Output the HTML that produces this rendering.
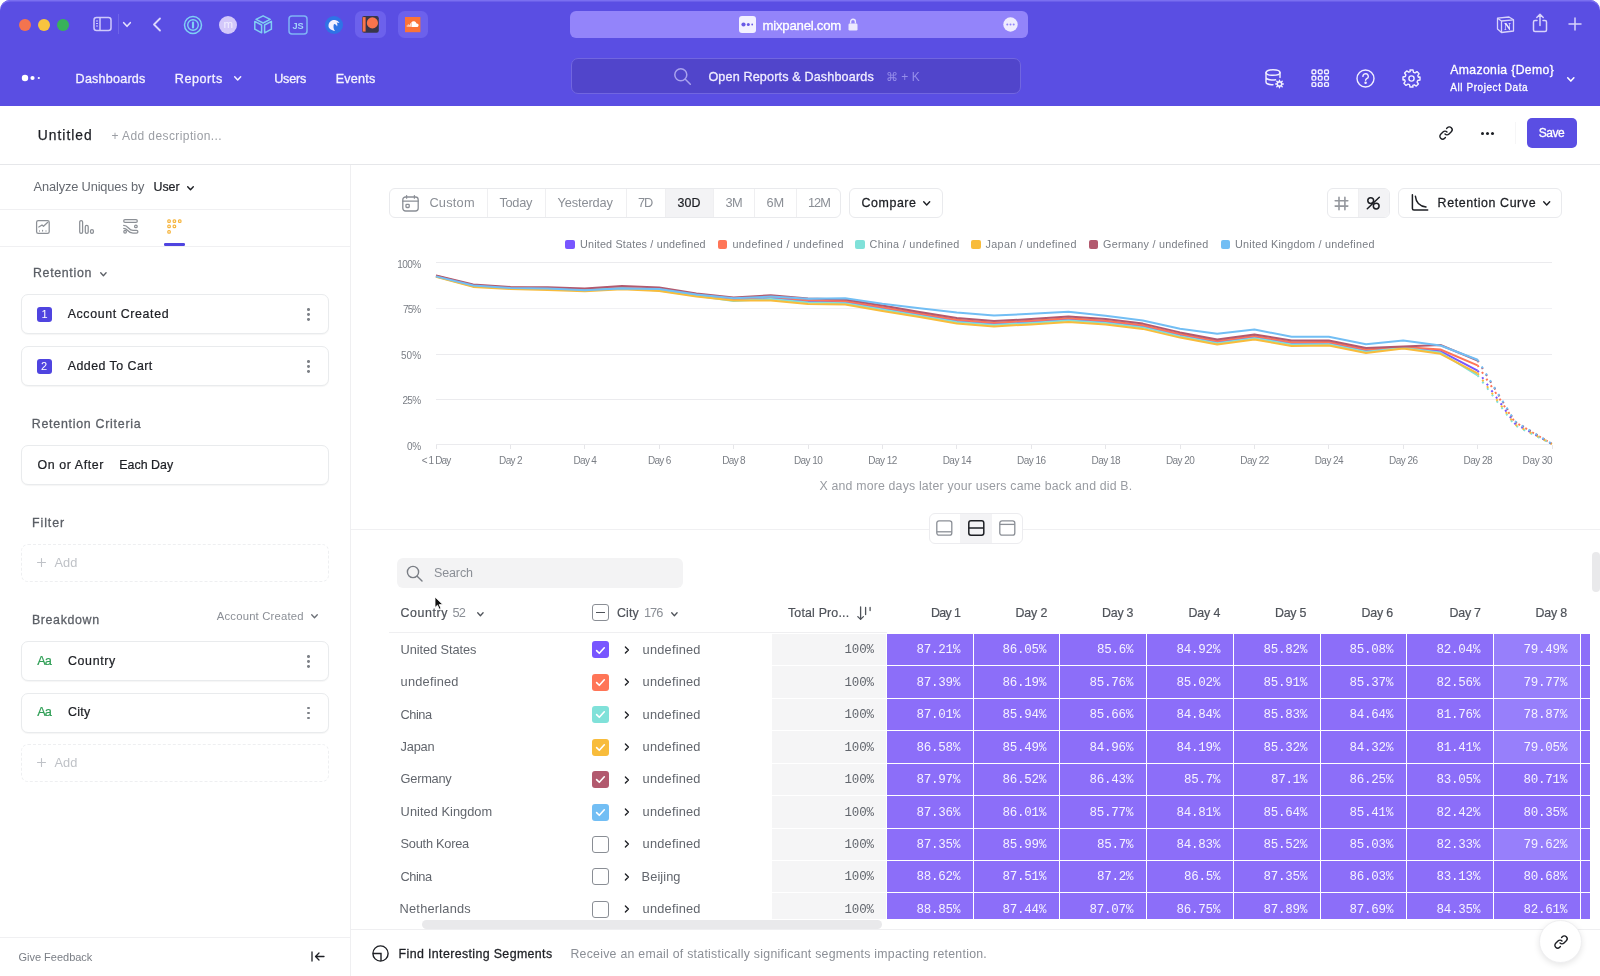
<!DOCTYPE html>
<html lang="en"><head><meta charset="utf-8"><title>Untitled - Mixpanel</title>
<style>
*{box-sizing:border-box;margin:0;padding:0}
html,body{width:1600px;height:976px;overflow:hidden;background:#fff}
body{font-family:"Liberation Sans",sans-serif;color:#222;position:relative;font-size:13px}
#app{position:absolute;left:0;top:0;width:1600px;height:976px;overflow:hidden;background:#fff;will-change:transform}
.a{position:absolute}
.t{position:absolute;white-space:nowrap;line-height:1}
.m{font-family:"Liberation Mono",monospace}
svg{position:absolute;overflow:visible}
#top{left:0;top:0;width:1600px;height:106px;background:#5a4ee3;border-radius:10px 10px 0 0;box-shadow:inset 0 1.5px 0 #7a6ff0}
.card{position:absolute;left:21px;width:308px;height:40px;border:1px solid #e9ebed;border-radius:7px;background:#fff;box-shadow:0 1px 1px rgba(0,0,0,.04)}
.dash{position:absolute;left:21px;width:308px;height:38px;border:1px dashed #eeeff1;border-radius:7px}
.kebab{position:absolute;left:307.2px;width:2.8px;height:2.8px;border-radius:50%;background:#7d8187;box-shadow:0 4.9px 0 #7d8187,0 -4.9px 0 #7d8187}
.seg{position:absolute;top:188px;height:30px;border:1px solid #e9eaed;border-radius:6px;background:#fff}
.vd{position:absolute;top:189px;width:1px;height:28px;background:#efeff1}
.sw{position:absolute;top:240px;width:9.4px;height:9.4px;border-radius:2px}
.tot{position:absolute;left:772px;width:114px;background:#f5f5f6}
.cell{position:absolute}
.cb{position:absolute;left:592px;width:17px;height:17px;border-radius:3px}
.cbe{border:1px solid #8a8e95;background:#fff}
</style></head>
<body>
<div id="app">
<div id="top" class="a"></div>
<div class="a" style="left:18.8px;top:18.9px;width:11.8px;height:11.8px;border-radius:50%;background:#f3744f"></div>
<div class="a" style="left:37.9px;top:18.9px;width:11.8px;height:11.8px;border-radius:50%;background:#f8c43f"></div>
<div class="a" style="left:57px;top:18.9px;width:11.8px;height:11.8px;border-radius:50%;background:#38b25a"></div>
<svg style="left:93px;top:16px" width="20" height="16" viewBox="0 0 20 16" fill="none" stroke="#cfc9fb" stroke-width="1.5"><rect x="1" y="1.5" width="17" height="13" rx="2.5"/><path d="M7 1.5v13"/><path d="M3 5h2M3 7.5h2M3 10h2" stroke-width="1"/></svg>
<div class="a" style="left:118px;top:14px;width:1px;height:20px;background:#6f64e8"></div>
<svg style="left:123px;top:21.5px" width="8" height="5" viewBox="0 0 8 5" fill="none" stroke="#e4e0fd" stroke-width="1.6" stroke-linecap="round" stroke-linejoin="round"><path d="M.7 .7L4 4.3L7.3 .7"/></svg>
<svg style="left:152px;top:17px" width="10" height="15" viewBox="0 0 10 15" fill="none" stroke="#dcd7fc" stroke-width="1.8" stroke-linecap="round" stroke-linejoin="round"><path d="M8 1.5L2 7.5l6 6"/></svg>
<svg style="left:183px;top:15px" width="20" height="20" viewBox="0 0 20 20" fill="none"><circle cx="10" cy="10" r="8.5" stroke="#7fd0f5" stroke-width="1.5"/><circle cx="10" cy="10" r="5.3" stroke="#7fd0f5" stroke-width="1.4"/><rect x="8.9" y="6.6" width="2.2" height="6.8" rx="1" fill="#7fd0f5"/></svg>
<div class="a" style="left:219px;top:16px;width:18px;height:18px;border-radius:50%;background:#d3c8fa"></div>
<div class="t" style="left:223.5px;top:19px;font-size:11.5px;color:#f1eefe">m</div>
<svg style="left:254px;top:15.4px" width="19" height="19" viewBox="0 0 19 19" fill="none" stroke="#80cef3" stroke-width="1.5" stroke-linejoin="round"><path d="M9.1 .8L16.2 4.4L9.1 8L2 4.4Z"/><path d="M.8 6.4L7.6 10V17.8L.8 14.2Z"/><path d="M10.6 10L17.4 6.4V14.2L10.6 17.8Z"/></svg>
<svg style="left:288px;top:15px" width="20" height="20" viewBox="0 0 20 20" fill="none"><rect x="1" y="1" width="18" height="18" rx="3" stroke="#7fb4f5" stroke-width="1.5"/><text x="10" y="13.5" text-anchor="middle" font-family="Liberation Sans, sans-serif" font-weight="700" font-size="9.2" fill="#a3d4fa">JS</text></svg>
<svg style="left:324px;top:15px" width="20" height="20" viewBox="0 0 20 20"><circle cx="10" cy="10" r="9" fill="#2f73e6"/><path d="M4.5 11c0-4 3-6.5 6.5-6 2 .3 3.5 1.5 4.5 3l-3-.5c1 1 1.2 2.5.5 4-.5-1.5-1.5-2.5-3-2.5-1 2.5-.5 5 1 7-3.5-.5-6.5-2.5-6.5-5z" fill="#f3f0ff"/></svg>
<div class="a" style="left:355px;top:11.4px;width:31px;height:26.8px;border-radius:6.5px;background:#6c61ec"></div>
<svg style="left:362.2px;top:16.2px" width="17" height="17" viewBox="0 0 17 17"><rect width="16.8" height="16.7" rx="2.2" fill="#37364a"/><rect x=".6" y="1.1" width="3" height="14.5" fill="#f9744c"/><circle cx="10.4" cy="6.9" r="5.6" fill="#f9744c"/></svg>
<div class="a" style="left:397.6px;top:11.4px;width:30.5px;height:26.8px;border-radius:6.5px;background:#6c61ec"></div>
<svg style="left:404.7px;top:17px" width="16" height="16" viewBox="0 0 16 16"><rect width="15.4" height="15.2" fill="#fb7337"/><path d="M2.2 9.8V8.3M3.3 9.8V7.3M4.4 9.8V7.8M5.5 9.8V6.3" stroke="#fde4d8" stroke-width=".9"/><path d="M6.4 10V5.3c.7-.9 1.7-1.3 2.7-1.1 1.2.2 2.1 1.1 2.4 2.3 1.1-.2 2.1.6 2.1 1.7 0 1-.8 1.8-1.8 1.8z" fill="#fff"/></svg>
<div class="a" style="left:570px;top:11px;width:458px;height:27px;border-radius:6px;background:#9384fa"></div>
<svg style="left:739px;top:16px" width="17" height="17" viewBox="0 0 17 17"><rect width="17" height="17" rx="3" fill="#f3f1ff"/><circle cx="4.5" cy="8.5" r="2.1" fill="#6a5be6"/><circle cx="9.3" cy="8.5" r="1.5" fill="#6a5be6"/><circle cx="13.2" cy="8.5" r=".9" fill="#6a5be6"/></svg>
<div class="t" style="left:762.5px;top:19px;font-size:13.2px;color:#fff;letter-spacing:-0.23px;-webkit-text-stroke:0.3px #fff">mixpanel.com</div>
<svg style="left:848px;top:18px" width="10" height="13" viewBox="0 0 10 13"><rect x=".5" y="5.5" width="9" height="7" rx="1.2" fill="#ece9fe"/><path d="M2.6 5.5V3.7a2.4 2.4 0 014.8 0v1.8" fill="none" stroke="#ece9fe" stroke-width="1.4"/></svg>
<svg style="left:1003px;top:17px" width="15" height="15" viewBox="0 0 15 15"><circle cx="7.5" cy="7.5" r="7.2" fill="#efecfe"/><circle cx="4.3" cy="7.5" r="1" fill="#9384fa"/><circle cx="7.5" cy="7.5" r="1" fill="#9384fa"/><circle cx="10.7" cy="7.5" r="1" fill="#9384fa"/></svg>
<svg style="left:1496px;top:15px" width="19" height="19" viewBox="0 0 19 19" fill="none" stroke="#d8d3fb" stroke-width="1.3" stroke-linejoin="round"><path d="M1.5 3.2l11.5-1.2 4.5 2.8V16l-12 1.5-4-3.5z"/><path d="M1.5 3.2l4 2.8 12-1.2M5.5 6v11.5"/><text x="11.4" y="14.6" text-anchor="middle" font-family="Liberation Serif, serif" font-weight="700" font-size="9.5" fill="#efecfe" stroke="none">N</text></svg>
<svg style="left:1532px;top:13px" width="16" height="20" viewBox="0 0 16 20" fill="none" stroke="#d8d3fb" stroke-width="1.5" stroke-linecap="round" stroke-linejoin="round"><path d="M5 7.5H3a1.5 1.5 0 00-1.5 1.5v8A1.5 1.5 0 003 18.5h10a1.5 1.5 0 001.5-1.5V9A1.5 1.5 0 0013 7.5h-2M8 12.5V1.5M4.8 4.5L8 1.3l3.2 3.2"/></svg>
<svg style="left:1568px;top:17px" width="14" height="14" viewBox="0 0 14 14" fill="none" stroke="#d8d3fb" stroke-width="1.5" stroke-linecap="round"><path d="M7 1v12M1 7h12"/></svg>
<svg style="left:21px;top:73px" width="22" height="10" viewBox="0 0 22 10"><circle cx="4" cy="5" r="3.2" fill="#fff"/><circle cx="11.5" cy="5" r="2.1" fill="#fff"/><circle cx="17.8" cy="5" r="1.1" fill="#fff"/></svg>
<div class="t" style="left:75.6px;top:73px;font-size:12.6px;color:#f4f2ff;letter-spacing:0.2px;-webkit-text-stroke:0.3px #f4f2ff">Dashboards</div>
<div class="t" style="left:174.8px;top:73px;font-size:12.6px;color:#f4f2ff;letter-spacing:0.55px;-webkit-text-stroke:0.3px #f4f2ff">Reports</div>
<svg style="left:233.8px;top:76px" width="7.4" height="4.7" viewBox="0 0 7.4 4.7" fill="none" stroke="#f4f2ff" stroke-width="1.5" stroke-linecap="round" stroke-linejoin="round"><path d="M.7 .7L3.7 4L6.7 .7"/></svg>
<div class="t" style="left:274.2px;top:73px;font-size:12.6px;color:#f4f2ff;letter-spacing:-0.22px;-webkit-text-stroke:0.3px #f4f2ff">Users</div>
<div class="t" style="left:335.7px;top:73px;font-size:12.6px;color:#f4f2ff;letter-spacing:0.2px;-webkit-text-stroke:0.3px #f4f2ff">Events</div>
<div class="a" style="left:571px;top:58px;width:450px;height:36px;border-radius:7px;background:#5145cb;border:1px solid #7166e0"></div>
<svg style="left:673px;top:67px" width="19" height="19" viewBox="0 0 19 19" fill="none" stroke="#a9a2ee" stroke-width="1.5" stroke-linecap="round"><circle cx="7.8" cy="7.8" r="6"/><path d="M12.3 12.3l5 5"/></svg>
<div class="t" style="left:708.4px;top:71px;font-size:12.6px;color:#efecff;letter-spacing:0.15px;-webkit-text-stroke:0.3px #efecff">Open Reports &amp; Dashboards</div>
<div class="t" style="left:885.9px;top:71px;font-size:12px;color:#968eea;letter-spacing:0.03px">⌘ + K</div>
<svg style="left:1264px;top:68px" width="22" height="22" viewBox="0 0 22 22" fill="none" stroke="#f1efff" stroke-width="1.4" stroke-linecap="round" stroke-linejoin="round"><ellipse cx="9" cy="4.5" rx="7" ry="2.8"/><path d="M2 4.5v9.5c0 1.5 3 2.8 7 2.8M16 4.5v5M2 9.2c0 1.5 3 2.8 7 2.8 1 0 1.8-.1 2.6-.2"/><circle cx="15.5" cy="16" r="2.2"/><path d="M15.5 12.2v1.6M15.5 18.2v1.6M11.7 16h1.6M17.7 16h1.6M12.8 13.3l1.1 1.1M17.1 17.6l1.1 1.1M12.8 18.7l1.1-1.1M17.1 14.4l1.1-1.1"/></svg>
<svg style="left:1311px;top:69px" width="19" height="19" viewBox="0 0 19 19" fill="none" stroke="#f1efff" stroke-width="1.4"><rect x="1" y="1" width="3.8" height="3.8" rx="1"/><rect x="1" y="7.3" width="3.8" height="3.8" rx="1"/><rect x="1" y="13.6" width="3.8" height="3.8" rx="1"/><rect x="7.3" y="1" width="3.8" height="3.8" rx="1"/><rect x="7.3" y="7.3" width="3.8" height="3.8" rx="1"/><rect x="7.3" y="13.6" width="3.8" height="3.8" rx="1"/><rect x="13.6" y="1" width="3.8" height="3.8" rx="1"/><rect x="13.6" y="7.3" width="3.8" height="3.8" rx="1"/><rect x="13.6" y="13.6" width="3.8" height="3.8" rx="1"/></svg>
<svg style="left:1356px;top:69px" width="19" height="19" viewBox="0 0 19 19" fill="none" stroke="#f1efff" stroke-width="1.4" stroke-linecap="round" stroke-linejoin="round"><circle cx="9.5" cy="9.5" r="8.5"/><path d="M6.9 7.4a2.7 2.7 0 115.2 1c-.4 1-2.5 1.3-2.5 2.8"/><circle cx="9.6" cy="13.8" r=".6" fill="#f1efff"/></svg>
<svg style="left:1401.5px;top:68.5px" width="19" height="19" viewBox="0 0 19 19" fill="none" stroke="#f1efff" stroke-width="1.4" stroke-linejoin="round"><path d="M8 1h3l.5 2.3 1.5.6 2-1.3 2.1 2.1-1.3 2 .6 1.5L18 8v3l-2.3.5-.6 1.5 1.3 2-2.1 2.1-2-1.3-1.5.6L11 18H8l-.5-2.3-1.5-.6-2 1.3-2.1-2.1 1.3-2-.6-1.5L1 11V8l2.3-.5.6-1.5-1.3-2 2.1-2.1 2 1.3 1.5-.6z"/><circle cx="9.5" cy="9.5" r="2.6"/></svg>
<div class="t" style="left:1450.3px;top:64px;font-size:12.2px;color:#fff;letter-spacing:0.37px;-webkit-text-stroke:0.3px #fff">Amazonia {Demo}</div>
<div class="t" style="left:1450.3px;top:83px;font-size:10px;color:#fff;letter-spacing:0.56px;-webkit-text-stroke:0.27px #fff">All Project Data</div>
<svg style="left:1566.7px;top:76.7px" width="7.6" height="4.8" viewBox="0 0 7.6 4.8" fill="none" stroke="#fff" stroke-width="1.5" stroke-linecap="round" stroke-linejoin="round"><path d="M.7 .7L3.8 4.1L6.8999999999999995 .7"/></svg>
<div class="a" style="left:0;top:164px;width:1600px;height:1px;background:#e6e7ea"></div>
<div class="t" style="left:37.7px;top:129px;font-size:13.8px;color:#1d1f24;letter-spacing:1.04px;-webkit-text-stroke:0.25px #1d1f24">Untitled</div>
<div class="t" style="left:111.5px;top:130px;font-size:12px;color:#9b9ea4;letter-spacing:0.41px">+ Add description...</div>
<svg style="left:1438.5px;top:125.5px" width="14" height="14" viewBox="0 0 14 14" fill="none" stroke="#1d1f24" stroke-width="1.4" stroke-linecap="round"><path d="M6 8a2.8 2.8 0 004 0l2.3-2.3a2.8 2.8 0 00-4-4L7.6 2.4"/><path d="M8 6a2.8 2.8 0 00-4 0L1.7 8.3a2.8 2.8 0 004 4l.7-.7"/></svg>
<div class="a" style="left:1481px;top:131.5px;width:3px;height:3px;border-radius:50%;background:#1d1f24;box-shadow:5px 0 0 #1d1f24,10px 0 0 #1d1f24"></div>
<div class="a" style="left:1515px;top:122px;width:1px;height:22px;background:#f6f6f7"></div>
<div class="a" style="left:1527px;top:118px;width:50px;height:29.5px;border-radius:5px;background:#5a4ee3"></div>
<div class="t" style="left:1538.7px;top:127px;font-size:12px;color:#fff;letter-spacing:-0.46px;-webkit-text-stroke:0.3px #fff">Save</div>
<div class="a" style="left:350px;top:165px;width:1px;height:811px;background:#efeff1"></div>
<div class="t" style="left:33.6px;top:181px;font-size:12.8px;color:#666a71;letter-spacing:-0.14px">Analyze Uniques by</div>
<div class="t" style="left:153.6px;top:181px;font-size:12.4px;color:#1d1f24;letter-spacing:-0.08px;-webkit-text-stroke:0.22px #1d1f24">User</div>
<svg style="left:187px;top:185.6px" width="7" height="4.5" viewBox="0 0 7 4.5" fill="none" stroke="#1d1f24" stroke-width="1.4" stroke-linecap="round" stroke-linejoin="round"><path d="M.7 .7L3.5 3.8L6.3 .7"/></svg>
<div class="a" style="left:0;top:209px;width:350px;height:1px;background:#f0f0f2"></div>
<div class="a" style="left:0;top:246px;width:350px;height:1px;background:#f0f0f2"></div>
<svg style="left:36px;top:219.5px" width="14" height="14" viewBox="0 0 14 14" fill="none" stroke="#8c9096" stroke-width="1.25" stroke-linecap="round" stroke-linejoin="round"><rect x=".6" y=".6" width="12.6" height="12.8" rx="1.7"/><path d="M2.8 7l3.2-2 1.5 1.3 4.3-4"/><path d="M3.5 10.9v.2M6.6 10.2v.9M10 10.9v.2" stroke-width="1.1"/></svg>
<svg style="left:79px;top:219.5px" width="15" height="14" viewBox="0 0 15 14" fill="none" stroke="#8c9096" stroke-width="1.25"><rect x=".7" y=".6" width="2.9" height="12.8" rx="1.4"/><rect x="6.3" y="5.4" width="2.9" height="8" rx="1.4"/><rect x="11.5" y="9.6" width="2.9" height="3.8" rx="1.4"/></svg>
<svg style="left:123px;top:219.2px" width="15" height="15" viewBox="0 0 15 15" fill="none" stroke="#8c9096" stroke-width="1.25" stroke-linecap="round" stroke-linejoin="round"><rect x=".7" y=".7" width="13.6" height="2.6" rx="1.3"/><path d="M.7 6.4C5.5 6.4 5.5 11.4 10 11.4H13.5A1.4 1.4 0 0113.5 14.2H10C4.5 14.2 5 9.3 .7 9.3"/><circle cx="12.9" cy="7.4" r="1.3"/><circle cx="2.1" cy="12.7" r="1.3"/></svg>
<svg style="left:166.9px;top:219.1px" width="15" height="15" viewBox="0 0 15 15" fill="none" stroke="#f6b53f" stroke-width="1.2"><rect x="0.8" y="0.8" width="2.5" height="2.5" rx=".9"/><rect x="6.15" y="0.8" width="2.5" height="2.5" rx=".9"/><rect x="11.5" y="0.8" width="2.5" height="2.5" rx=".9"/><rect x="0.8" y="6.2" width="2.5" height="2.5" rx=".9"/><rect x="6.15" y="6.2" width="2.5" height="2.5" rx=".9"/><rect x="0.8" y="11.6" width="2.5" height="2.5" rx=".9"/></svg>
<div class="a" style="left:164px;top:243px;width:20.5px;height:2.6px;border-radius:1.3px;background:#4f44e0"></div>
<div class="t" style="left:33px;top:267px;font-size:12.4px;color:#5b5f66;letter-spacing:0.66px;-webkit-text-stroke:0.28px #5b5f66">Retention</div>
<svg style="left:99.6px;top:272px" width="6.8" height="4.4" viewBox="0 0 6.8 4.4" fill="none" stroke="#5b5f66" stroke-width="1.3" stroke-linecap="round" stroke-linejoin="round"><path d="M.7 .7L3.4 3.6999999999999997L6.1 .7"/></svg>
<div class="card" style="top:294px"></div>
<div class="a" style="left:37px;top:306.5px;width:15.2px;height:15.2px;border-radius:3px;background:#4f44e0"></div>
<div class="t" style="left:41.5px;top:309px;font-size:11px;color:#fff">1</div>
<div class="t" style="left:67.7px;top:308px;font-size:12.4px;color:#1d1f24;letter-spacing:0.61px;-webkit-text-stroke:0.22px #1d1f24">Account Created</div>
<div class="kebab" style="top:313px"></div>
<div class="card" style="top:346px"></div>
<div class="a" style="left:37px;top:358.5px;width:15.2px;height:15.2px;border-radius:3px;background:#4f44e0"></div>
<div class="t" style="left:41px;top:361px;font-size:11px;color:#fff">2</div>
<div class="t" style="left:67.7px;top:360px;font-size:12.4px;color:#1d1f24;letter-spacing:0.47px;-webkit-text-stroke:0.22px #1d1f24">Added To Cart</div>
<div class="kebab" style="top:365px"></div>
<div class="t" style="left:31.8px;top:418px;font-size:12.4px;color:#5b5f66;letter-spacing:0.73px;-webkit-text-stroke:0.28px #5b5f66">Retention Criteria</div>
<div class="card" style="top:445px"></div>
<div class="t" style="left:37.5px;top:459px;font-size:12.4px;color:#1d1f24;letter-spacing:0.6px;-webkit-text-stroke:0.22px #1d1f24">On or After</div>
<div class="t" style="left:119.2px;top:459px;font-size:12.4px;color:#1d1f24;letter-spacing:0.04px;-webkit-text-stroke:0.22px #1d1f24">Each Day</div>
<div class="t" style="left:31.9px;top:517px;font-size:12.4px;color:#5b5f66;letter-spacing:0.96px;-webkit-text-stroke:0.28px #5b5f66">Filter</div>
<div class="dash" style="top:543.5px"></div>
<svg style="left:37.3px;top:558px" width="9" height="9" viewBox="0 0 9 9" fill="none" stroke="#bfc2c7" stroke-width="1.1" stroke-linecap="round"><path d="M4.5 .5v8M.5 4.5h8"/></svg>
<div class="t" style="left:54.6px;top:557px;font-size:12.8px;color:#bfc2c7;letter-spacing:-0.03px">Add</div>
<div class="t" style="left:31.9px;top:614px;font-size:12.4px;color:#5b5f66;letter-spacing:0.65px;-webkit-text-stroke:0.28px #5b5f66">Breakdown</div>
<div class="t" style="left:216.8px;top:611px;font-size:11.3px;color:#8b8f96;letter-spacing:0.19px">Account Created</div>
<svg style="left:310.7px;top:614.4px" width="7" height="4.5" viewBox="0 0 7 4.5" fill="none" stroke="#6b6f76" stroke-width="1.3" stroke-linecap="round" stroke-linejoin="round"><path d="M.7 .7L3.5 3.8L6.3 .7"/></svg>
<div class="card" style="top:641px"></div>
<div class="t" style="left:37.3px;top:655px;font-size:12.8px;color:#2e9e55;letter-spacing:-1px;-webkit-text-stroke:0.2px #2e9e55">Aa</div>
<div class="t" style="left:67.9px;top:655px;font-size:12.4px;color:#1d1f24;letter-spacing:0.67px;-webkit-text-stroke:0.22px #1d1f24">Country</div>
<div class="kebab" style="top:660px"></div>
<div class="card" style="top:692.5px"></div>
<div class="t" style="left:37.3px;top:706px;font-size:12.8px;color:#2e9e55;letter-spacing:-1px;-webkit-text-stroke:0.2px #2e9e55">Aa</div>
<div class="t" style="left:67.9px;top:706px;font-size:12.4px;color:#1d1f24;letter-spacing:0.35px;-webkit-text-stroke:0.22px #1d1f24">City</div>
<div class="kebab" style="top:711.5px"></div>
<div class="dash" style="top:743.5px"></div>
<svg style="left:37.3px;top:758px" width="9" height="9" viewBox="0 0 9 9" fill="none" stroke="#bfc2c7" stroke-width="1.1" stroke-linecap="round"><path d="M4.5 .5v8M.5 4.5h8"/></svg>
<div class="t" style="left:54.6px;top:757px;font-size:12.8px;color:#bfc2c7;letter-spacing:-0.03px">Add</div>
<div class="a" style="left:0;top:937px;width:350px;height:1px;background:#f0f0f2"></div>
<div class="t" style="left:18.4px;top:952px;font-size:11px;color:#7a7e85">Give Feedback</div>
<svg style="left:311px;top:951px" width="14" height="11" viewBox="0 0 14 11" fill="none" stroke="#1d1f24" stroke-width="1.3" stroke-linecap="round" stroke-linejoin="round"><path d="M1 1v9M13 5.5H4.5M8 2l-3.5 3.5L8 9"/></svg>
<div class="seg" style="left:389px;width:452px"></div>
<div class="a" style="left:665px;top:189px;width:48.5px;height:28px;background:#f3f3f5"></div>
<div class="vd" style="left:487px"></div>
<div class="vd" style="left:545px"></div>
<div class="vd" style="left:626px"></div>
<div class="vd" style="left:665px"></div>
<div class="vd" style="left:713px"></div>
<div class="vd" style="left:754px"></div>
<div class="vd" style="left:796px"></div>
<svg style="left:402px;top:194.5px" width="17" height="17" viewBox="0 0 17 17" fill="none" stroke="#8b8f96" stroke-width="1.3" stroke-linecap="round"><rect x=".8" y="2" width="15.4" height="14" rx="2.8"/><path d="M.8 6.2h15.4M4.6 .6v2.6M12.4 .6v2.6"/><rect x="4" y="9.3" width="3.2" height="3.2" rx=".7"/></svg>
<div class="t" style="left:429.4px;top:197px;font-size:12.8px;color:#8b8f96;letter-spacing:0.23px">Custom</div>
<div class="t" style="left:499.4px;top:197px;font-size:12.8px;color:#8b8f96;letter-spacing:-0.29px">Today</div>
<div class="t" style="left:557.6px;top:197px;font-size:12.8px;color:#8b8f96;letter-spacing:-0.13px">Yesterday</div>
<div class="t" style="left:638px;top:197px;font-size:12.8px;color:#8b8f96;letter-spacing:-1px">7D</div>
<div class="t" style="left:677.6px;top:197px;font-size:12.4px;color:#1d1f24;letter-spacing:0.11px;-webkit-text-stroke:0.22px #1d1f24">30D</div>
<div class="t" style="left:725.6px;top:197px;font-size:12.8px;color:#8b8f96;letter-spacing:-0.72px">3M</div>
<div class="t" style="left:766.6px;top:197px;font-size:12.8px;color:#8b8f96;letter-spacing:-0.32px">6M</div>
<div class="t" style="left:808px;top:197px;font-size:12.8px;color:#8b8f96;letter-spacing:-1px">12M</div>
<div class="seg" style="left:849px;width:93.5px"></div>
<div class="t" style="left:861.6px;top:197px;font-size:12.4px;color:#1d1f24;letter-spacing:0.56px;-webkit-text-stroke:0.27px #1d1f24">Compare</div>
<svg style="left:923px;top:201px" width="7.4" height="4.7" viewBox="0 0 7.4 4.7" fill="none" stroke="#1d1f24" stroke-width="1.4" stroke-linecap="round" stroke-linejoin="round"><path d="M.7 .7L3.7 4L6.7 .7"/></svg>
<div class="seg" style="left:1326.5px;width:63px"></div>
<div class="a" style="left:1357.5px;top:189px;width:31px;height:28px;background:#f3f3f5;border-radius:0 5px 5px 0"></div>
<div class="vd" style="left:1357.5px"></div>
<svg style="left:1334px;top:195.5px" width="15" height="15" viewBox="0 0 15 15" fill="none" stroke="#95989e" stroke-width="1.6" stroke-linecap="round"><path d="M5 1.2v12.6M10.9 1.2v12.6M1.2 4.8h12.6M1.2 10.1h12.6"/></svg>
<svg style="left:1366px;top:195.5px" width="15" height="15" viewBox="0 0 15 15" fill="none" stroke="#1d1f24" stroke-width="1.5" stroke-linecap="round"><path d="M13.3 1.2L1.3 12.8"/><circle cx="4.7" cy="4.6" r="2.9"/><circle cx="10.2" cy="10.1" r="2.9"/></svg>
<div class="seg" style="left:1397.5px;width:164px"></div>
<svg style="left:1411px;top:194px" width="18" height="17" viewBox="0 0 18 17" fill="none" stroke="#1d1f24" stroke-width="1.5" stroke-linecap="round" stroke-linejoin="round"><path d="M1.4 .8v13.7q0 1.5 1.5 1.5h13.8"/><path d="M4.4 2.3c.6 6 4 10 10.6 10.7"/></svg>
<div class="t" style="left:1437.6px;top:197px;font-size:12.4px;color:#1d1f24;letter-spacing:0.6px;-webkit-text-stroke:0.27px #1d1f24">Retention Curve</div>
<svg style="left:1543px;top:201px" width="7.4" height="4.7" viewBox="0 0 7.4 4.7" fill="none" stroke="#1d1f24" stroke-width="1.4" stroke-linecap="round" stroke-linejoin="round"><path d="M.7 .7L3.7 4L6.7 .7"/></svg>
<div class="sw" style="left:565.4px;background:#7856ff"></div>
<div class="t" style="left:580px;top:239px;font-size:10.8px;color:#7a7e85;letter-spacing:0.18px">United States / undefined</div>
<div class="sw" style="left:718px;background:#ff7557"></div>
<div class="t" style="left:732.4px;top:239px;font-size:10.8px;color:#7a7e85;letter-spacing:0.36px">undefined / undefined</div>
<div class="sw" style="left:855.4px;background:#80e1d9"></div>
<div class="t" style="left:869.6px;top:239px;font-size:10.8px;color:#7a7e85;letter-spacing:0.32px">China / undefined</div>
<div class="sw" style="left:971.4px;background:#f8bc3b"></div>
<div class="t" style="left:985.6px;top:239px;font-size:10.8px;color:#7a7e85;letter-spacing:0.31px">Japan / undefined</div>
<div class="sw" style="left:1088.6px;background:#b2596e"></div>
<div class="t" style="left:1103px;top:239px;font-size:10.8px;color:#7a7e85;letter-spacing:0.25px">Germany / undefined</div>
<div class="sw" style="left:1220.6px;background:#72bef4"></div>
<div class="t" style="left:1235px;top:239px;font-size:10.8px;color:#7a7e85;letter-spacing:0.25px">United Kingdom / undefined</div>
<div class="a" style="left:436px;top:261.9px;width:1116px;height:1px;background:#ebebee"></div>
<div class="t" style="left:397.2px;top:260px;font-size:10px;color:#7a7e85;letter-spacing:-0.56px">100%</div>
<div class="a" style="left:436px;top:308.4px;width:1116px;height:1px;background:#f1f1f4"></div>
<div class="t" style="left:403.1px;top:305px;font-size:10px;color:#7a7e85;letter-spacing:-1px">75%</div>
<div class="a" style="left:436px;top:353.8px;width:1116px;height:1px;background:#ebebee"></div>
<div class="t" style="left:401px;top:351px;font-size:10px;color:#7a7e85;letter-spacing:0.04px">50%</div>
<div class="a" style="left:436px;top:398.7px;width:1116px;height:1px;background:#ebebee"></div>
<div class="t" style="left:402.5px;top:396px;font-size:10px;color:#7a7e85;letter-spacing:-0.71px">25%</div>
<div class="a" style="left:436px;top:444.2px;width:1116px;height:1px;background:#ebebee"></div>
<div class="t" style="left:407px;top:442px;font-size:10px;color:#7a7e85;letter-spacing:-0.36px">0%</div>
<div class="a" style="left:435.5px;top:445px;width:1px;height:4px;background:#e6e6e9"></div>
<div class="t" style="left:421.7px;top:456px;font-size:10px;color:#7a7e85;letter-spacing:-0.87px">&lt; 1 Day</div>
<div class="a" style="left:509.9px;top:445px;width:1px;height:4px;background:#e6e6e9"></div>
<div class="t" style="left:499.1px;top:456px;font-size:10px;color:#7a7e85;letter-spacing:-0.69px">Day 2</div>
<div class="a" style="left:584.3px;top:445px;width:1px;height:4px;background:#e6e6e9"></div>
<div class="t" style="left:573.5px;top:456px;font-size:10px;color:#7a7e85;letter-spacing:-0.69px">Day 4</div>
<div class="a" style="left:658.7px;top:445px;width:1px;height:4px;background:#e6e6e9"></div>
<div class="t" style="left:647.9px;top:456px;font-size:10px;color:#7a7e85;letter-spacing:-0.69px">Day 6</div>
<div class="a" style="left:733.1px;top:445px;width:1px;height:4px;background:#e6e6e9"></div>
<div class="t" style="left:722.3px;top:456px;font-size:10px;color:#7a7e85;letter-spacing:-0.69px">Day 8</div>
<div class="a" style="left:807.5px;top:445px;width:1px;height:4px;background:#e6e6e9"></div>
<div class="t" style="left:793.9px;top:456px;font-size:10px;color:#7a7e85;letter-spacing:-0.54px">Day 10</div>
<div class="a" style="left:881.9px;top:445px;width:1px;height:4px;background:#e6e6e9"></div>
<div class="t" style="left:868.3px;top:456px;font-size:10px;color:#7a7e85;letter-spacing:-0.54px">Day 12</div>
<div class="a" style="left:956.3px;top:445px;width:1px;height:4px;background:#e6e6e9"></div>
<div class="t" style="left:942.7px;top:456px;font-size:10px;color:#7a7e85;letter-spacing:-0.54px">Day 14</div>
<div class="a" style="left:1030.7px;top:445px;width:1px;height:4px;background:#e6e6e9"></div>
<div class="t" style="left:1017.1px;top:456px;font-size:10px;color:#7a7e85;letter-spacing:-0.54px">Day 16</div>
<div class="a" style="left:1105.1px;top:445px;width:1px;height:4px;background:#e6e6e9"></div>
<div class="t" style="left:1091.5px;top:456px;font-size:10px;color:#7a7e85;letter-spacing:-0.54px">Day 18</div>
<div class="a" style="left:1179.5px;top:445px;width:1px;height:4px;background:#e6e6e9"></div>
<div class="t" style="left:1165.9px;top:456px;font-size:10px;color:#7a7e85;letter-spacing:-0.54px">Day 20</div>
<div class="a" style="left:1253.9px;top:445px;width:1px;height:4px;background:#e6e6e9"></div>
<div class="t" style="left:1240.3px;top:456px;font-size:10px;color:#7a7e85;letter-spacing:-0.54px">Day 22</div>
<div class="a" style="left:1328.3px;top:445px;width:1px;height:4px;background:#e6e6e9"></div>
<div class="t" style="left:1314.7px;top:456px;font-size:10px;color:#7a7e85;letter-spacing:-0.54px">Day 24</div>
<div class="a" style="left:1402.7px;top:445px;width:1px;height:4px;background:#e6e6e9"></div>
<div class="t" style="left:1389.1px;top:456px;font-size:10px;color:#7a7e85;letter-spacing:-0.54px">Day 26</div>
<div class="a" style="left:1477.1px;top:445px;width:1px;height:4px;background:#e6e6e9"></div>
<div class="t" style="left:1463.5px;top:456px;font-size:10px;color:#7a7e85;letter-spacing:-0.54px">Day 28</div>
<div class="a" style="left:1551.5px;top:445px;width:1px;height:4px;background:#e6e6e9"></div>
<div class="t" style="left:1522.5px;top:456px;font-size:10px;color:#7a7e85;letter-spacing:-0.32px">Day 30</div>
<div class="t" style="left:819.5px;top:480px;font-size:12.3px;color:#999ca2;letter-spacing:0.19px">X and more days later your users came back and did B.</div>
<svg style="left:0;top:0" width="1600" height="976" viewBox="0 0 1600 976" fill="none" stroke-width="2" stroke-linejoin="round"><polyline points="436,276.2 473.2,285.8 510.4,287.9 547.6,288.7 584.8,290 622,288.3 659.2,289.7 696.4,295.2 733.6,299.8 770.8,298 808,301.4 845.2,302.2 882.4,308.4 919.6,314.7 956.8,320.9 994,323.9 1031.2,321.9 1068.4,319.4 1105.6,321.9 1142.8,326.4 1180,335.2 1217.2,342.2 1254.4,337.2 1291.6,343.4 1328.8,343.2 1366,350.7 1403.2,347.6 1440.4,351.2 1477.6,370.7" stroke="#7856ff"/><polyline points="1477.6,370.7 1514.8,423.5 1552,444" stroke="#7856ff" stroke-width="2" stroke-dasharray="2 6"/><polyline points="436,275.8 473.2,285.5 510.4,287.6 547.6,288.4 584.8,289.8 622,288.2 659.2,289.1 696.4,294.3 733.6,299.3 770.8,296.8 808,300.2 845.2,301 882.4,307.2 919.6,313.5 956.8,319.8 994,322.8 1031.2,320.8 1068.4,318.2 1105.6,320.8 1142.8,325.2 1180,334 1217.2,341 1254.4,336 1291.6,342.2 1328.8,342 1366,349.5 1403.2,347.1 1440.4,349.5 1477.6,365.3" stroke="#ff7557"/><polyline points="1477.6,365.3 1514.8,422 1552,444" stroke="#ff7557" stroke-width="2" stroke-dasharray="2 6"/><polyline points="436,276.5 473.2,286.2 510.4,288.1 547.6,288.6 584.8,290.1 622,288.3 659.2,290.5 696.4,295.7 733.6,301 770.8,299 808,302.4 845.2,303.2 882.4,309.4 919.6,315.7 956.8,321.9 994,324.9 1031.2,322.9 1068.4,320.4 1105.6,322.9 1142.8,327.4 1180,336.2 1217.2,343.2 1254.4,338.2 1291.6,344.4 1328.8,344.2 1366,351.7 1403.2,347.9 1440.4,352.5 1477.6,375.3" stroke="#80e1d9"/><polyline points="1477.6,375.3 1514.8,425.3 1552,444" stroke="#80e1d9" stroke-width="2" stroke-dasharray="2 6"/><polyline points="436,276.8 473.2,286.9 510.4,288.9 547.6,289.9 584.8,291.3 622,289.2 659.2,291.1 696.4,296.4 733.6,300.6 770.8,300.4 808,303.9 845.2,304.6 882.4,310.9 919.6,317.1 956.8,323.4 994,326.4 1031.2,324.4 1068.4,321.9 1105.6,324.4 1142.8,328.9 1180,337.6 1217.2,344.6 1254.4,339.6 1291.6,345.9 1328.8,345.6 1366,353.1 1403.2,348.4 1440.4,353.8 1477.6,373.3" stroke="#f8bc3b"/><polyline points="1477.6,373.3 1514.8,424.5 1552,444" stroke="#f8bc3b" stroke-width="2" stroke-dasharray="2 6"/><polyline points="436,275.4 473.2,284.4 510.4,287 547.6,287.2 584.8,288.5 622,286 659.2,287.5 696.4,293.4 733.6,297.6 770.8,295.2 808,298.6 845.2,299.4 882.4,305.6 919.6,311.9 956.8,318.1 994,321.1 1031.2,319.1 1068.4,316.6 1105.6,319.1 1142.8,323.6 1180,332.4 1217.2,339.4 1254.4,334.4 1291.6,340.6 1328.8,340.4 1366,347.9 1403.2,346.6 1440.4,345 1477.6,360.5" stroke="#b2596e"/><polyline points="1477.6,360.5 1514.8,421.5 1552,444" stroke="#b2596e" stroke-width="2" stroke-dasharray="2 6"/><polyline points="436,276.4 473.2,285.5 510.4,288 547.6,288.4 584.8,290.2 622,288.6 659.2,289.1 696.4,294.5 733.6,298.3 770.8,296.6 808,298.8 845.2,298.2 882.4,303.8 919.6,308.2 956.8,312.5 994,315.5 1031.2,313.8 1068.4,311.8 1105.6,315.8 1142.8,320.5 1180,328.8 1217.2,333.8 1254.4,329.5 1291.6,336.8 1328.8,336.8 1366,344.2 1403.2,340.5 1440.4,345.5 1477.6,359.7" stroke="#72bef4"/><polyline points="1477.6,359.7 1514.8,421.3 1552,444" stroke="#72bef4" stroke-width="2" stroke-dasharray="2 6"/></svg>
<div class="a" style="left:351px;top:528.5px;width:1249px;height:1px;background:#f0f0f2"></div>
<div class="a" style="left:928.5px;top:513px;width:94px;height:30.5px;border:1px solid #ececef;border-radius:6px;background:#fff"></div>
<div class="a" style="left:960px;top:514px;width:31.5px;height:28.5px;background:#f3f3f5"></div>
<svg style="left:936px;top:520px" width="17" height="16" viewBox="0 0 17 16" fill="none" stroke="#8b8f96" stroke-width="1.3"><rect x=".8" y=".8" width="15" height="14.4" rx="2.2"/><path d="M.8 11.8h15"/></svg>
<svg style="left:967.5px;top:520px" width="17" height="16" viewBox="0 0 17 16" fill="none" stroke="#1d1f24" stroke-width="1.5"><rect x=".8" y=".8" width="15" height="14.4" rx="2.2"/><path d="M.8 8h15"/></svg>
<svg style="left:999px;top:520px" width="17" height="16" viewBox="0 0 17 16" fill="none" stroke="#8b8f96" stroke-width="1.3"><rect x=".8" y=".8" width="15" height="14.4" rx="2.2"/><path d="M.8 4.4h15"/></svg>
<div class="a" style="left:397px;top:557.5px;width:285.5px;height:30px;border-radius:6px;background:#f3f3f4"></div>
<svg style="left:405.5px;top:564.5px" width="17" height="17" viewBox="0 0 17 17" fill="none" stroke="#7a7e85" stroke-width="1.4" stroke-linecap="round"><circle cx="7" cy="7" r="5.6"/><path d="M11.2 11.2l4.8 4.8"/></svg>
<div class="t" style="left:434px;top:567px;font-size:12.5px;color:#8b8f96;letter-spacing:-0.13px">Search</div>
<div class="t" style="left:400.6px;top:607px;font-size:12.4px;color:#4f535a;letter-spacing:0.57px;-webkit-text-stroke:0.2px #4f535a">Country</div>
<div class="t" style="left:452.6px;top:607px;font-size:12.8px;color:#8b8f96;letter-spacing:-1px">52</div>
<svg style="left:476.6px;top:611.6px" width="6.8" height="4.4" viewBox="0 0 6.8 4.4" fill="none" stroke="#4f535a" stroke-width="1.3" stroke-linecap="round" stroke-linejoin="round"><path d="M.7 .7L3.4 3.6999999999999997L6.1 .7"/></svg>
<div class="cb cbe" style="top:604.3px"></div><div class="a" style="left:596px;top:612px;width:8.6px;height:1.4px;background:#4f535a"></div>
<div class="t" style="left:617px;top:607px;font-size:12.4px;color:#4f535a;letter-spacing:0.15px;-webkit-text-stroke:0.2px #4f535a">City</div>
<div class="t" style="left:644px;top:607px;font-size:12.8px;color:#8b8f96;letter-spacing:-1px">176</div>
<svg style="left:671px;top:611.6px" width="6.8" height="4.4" viewBox="0 0 6.8 4.4" fill="none" stroke="#4f535a" stroke-width="1.3" stroke-linecap="round" stroke-linejoin="round"><path d="M.7 .7L3.4 3.6999999999999997L6.1 .7"/></svg>
<div class="t" style="left:788px;top:607px;font-size:12.4px;color:#4f535a;letter-spacing:0.17px;-webkit-text-stroke:0.2px #4f535a">Total Pro...</div>
<svg style="left:856.5px;top:605.5px" width="15" height="15" viewBox="0 0 15 15" fill="none" stroke="#4f535a" stroke-width="1.3" stroke-linecap="round" stroke-linejoin="round"><path d="M3.6 .8v12.6M.8 10.6l2.8 2.8 2.8-2.8M8.6 1.5v7M13.1 1.5v3"/></svg>
<div class="t" style="left:931px;top:607px;font-size:12.4px;color:#4f535a;letter-spacing:-0.62px;-webkit-text-stroke:0.2px #4f535a">Day 1</div>
<div class="t" style="left:1015.6px;top:607px;font-size:12.4px;color:#4f535a;letter-spacing:-0.17px;-webkit-text-stroke:0.2px #4f535a">Day 2</div>
<div class="t" style="left:1102px;top:607px;font-size:12.4px;color:#4f535a;letter-spacing:-0.22px;-webkit-text-stroke:0.2px #4f535a">Day 3</div>
<div class="t" style="left:1188.5px;top:607px;font-size:12.4px;color:#4f535a;letter-spacing:-0.14px;-webkit-text-stroke:0.2px #4f535a">Day 4</div>
<div class="t" style="left:1275px;top:607px;font-size:12.4px;color:#4f535a;letter-spacing:-0.24px;-webkit-text-stroke:0.2px #4f535a">Day 5</div>
<div class="t" style="left:1361.5px;top:607px;font-size:12.4px;color:#4f535a;letter-spacing:-0.17px;-webkit-text-stroke:0.2px #4f535a">Day 6</div>
<div class="t" style="left:1449.6px;top:607px;font-size:12.4px;color:#4f535a;letter-spacing:-0.27px;-webkit-text-stroke:0.2px #4f535a">Day 7</div>
<div class="t" style="left:1535.5px;top:607px;font-size:12.4px;color:#4f535a;letter-spacing:-0.17px;-webkit-text-stroke:0.2px #4f535a">Day 8</div>
<div class="a" style="left:389px;top:632px;width:498px;height:1px;background:#efeff1"></div>
<div class="t" style="left:400.6px;top:644px;font-size:12.8px;color:#62666d;letter-spacing:-0.09px">United States</div>
<div class="cb" style="top:641.4px;background:#7856ff"></div>
<svg style="left:595.3px;top:645.5px" width="11" height="9" viewBox="0 0 11 9" fill="none" stroke="#fff" stroke-width="1.6" stroke-linecap="round" stroke-linejoin="round"><path d="M1.6 4.6l2.7 2.7 5-5.5"/></svg>
<svg style="left:623.6px;top:645.9px" width="6" height="8" viewBox="0 0 6 8" fill="none" stroke="#1d1f24" stroke-width="1.35" stroke-linecap="round" stroke-linejoin="round"><path d="M1.4 1l3 3-3 3"/></svg>
<div class="t" style="left:642.6px;top:644px;font-size:12.8px;color:#62666d;letter-spacing:0.21px">undefined</div>
<div class="tot" style="top:633.96px;height:31.43px"></div>
<div class="t m" style="left:844.6px;top:644px;font-size:12.5px;color:#62666d;letter-spacing:-0.23px">100%</div>
<div class="cell" style="left:887px;top:633.96px;width:86px;height:31.43px;background:#8c6ef9"></div>
<div class="t m" style="left:916.5px;top:644px;font-size:12.5px;color:#f6f3ff;letter-spacing:-0.22px">87.21%</div>
<div class="cell" style="left:974px;top:633.96px;width:85px;height:31.43px;background:#8c6ef9"></div>
<div class="t m" style="left:1002.5px;top:644px;font-size:12.5px;color:#f6f3ff;letter-spacing:-0.22px">86.05%</div>
<div class="cell" style="left:1060px;top:633.96px;width:86px;height:31.43px;background:#8c6ef9"></div>
<div class="t m" style="left:1097px;top:644px;font-size:12.5px;color:#f6f3ff;letter-spacing:-0.28px">85.6%</div>
<div class="cell" style="left:1147px;top:633.96px;width:86px;height:31.43px;background:#8c6ef9"></div>
<div class="t m" style="left:1176.5px;top:644px;font-size:12.5px;color:#f6f3ff;letter-spacing:-0.22px">84.92%</div>
<div class="cell" style="left:1234px;top:633.96px;width:86px;height:31.43px;background:#8c6ef9"></div>
<div class="t m" style="left:1263.5px;top:644px;font-size:12.5px;color:#f6f3ff;letter-spacing:-0.22px">85.82%</div>
<div class="cell" style="left:1321px;top:633.96px;width:85px;height:31.43px;background:#8c6ef9"></div>
<div class="t m" style="left:1349.5px;top:644px;font-size:12.5px;color:#f6f3ff;letter-spacing:-0.22px">85.08%</div>
<div class="cell" style="left:1407px;top:633.96px;width:86px;height:31.43px;background:#8c6ef9"></div>
<div class="t m" style="left:1436.5px;top:644px;font-size:12.5px;color:#f6f3ff;letter-spacing:-0.22px">82.04%</div>
<div class="cell" style="left:1494px;top:633.96px;width:86px;height:31.43px;background:#977ffb"></div>
<div class="t m" style="left:1523.5px;top:644px;font-size:12.5px;color:#f6f3ff;letter-spacing:-0.22px">79.49%</div>
<div class="a" style="left:1581px;top:633.96px;width:9.4px;height:31.43px;background:#8c6ef9"></div>
<div class="t" style="left:400.6px;top:676px;font-size:12.8px;color:#62666d;letter-spacing:0.21px">undefined</div>
<div class="cb" style="top:673.8px;background:#ff7557"></div>
<svg style="left:595.3px;top:677.9px" width="11" height="9" viewBox="0 0 11 9" fill="none" stroke="#fff" stroke-width="1.6" stroke-linecap="round" stroke-linejoin="round"><path d="M1.6 4.6l2.7 2.7 5-5.5"/></svg>
<svg style="left:623.6px;top:678.3px" width="6" height="8" viewBox="0 0 6 8" fill="none" stroke="#1d1f24" stroke-width="1.35" stroke-linecap="round" stroke-linejoin="round"><path d="M1.4 1l3 3-3 3"/></svg>
<div class="t" style="left:642.6px;top:676px;font-size:12.8px;color:#62666d;letter-spacing:0.21px">undefined</div>
<div class="tot" style="top:666.39px;height:31.43px"></div>
<div class="t m" style="left:844.6px;top:677px;font-size:12.5px;color:#62666d;letter-spacing:-0.23px">100%</div>
<div class="cell" style="left:887px;top:666.39px;width:86px;height:31.43px;background:#8c6ef9"></div>
<div class="t m" style="left:916.5px;top:677px;font-size:12.5px;color:#f6f3ff;letter-spacing:-0.22px">87.39%</div>
<div class="cell" style="left:974px;top:666.39px;width:85px;height:31.43px;background:#8c6ef9"></div>
<div class="t m" style="left:1002.5px;top:677px;font-size:12.5px;color:#f6f3ff;letter-spacing:-0.22px">86.19%</div>
<div class="cell" style="left:1060px;top:666.39px;width:86px;height:31.43px;background:#8c6ef9"></div>
<div class="t m" style="left:1089.5px;top:677px;font-size:12.5px;color:#f6f3ff;letter-spacing:-0.22px">85.76%</div>
<div class="cell" style="left:1147px;top:666.39px;width:86px;height:31.43px;background:#8c6ef9"></div>
<div class="t m" style="left:1176.5px;top:677px;font-size:12.5px;color:#f6f3ff;letter-spacing:-0.22px">85.02%</div>
<div class="cell" style="left:1234px;top:666.39px;width:86px;height:31.43px;background:#8c6ef9"></div>
<div class="t m" style="left:1263.5px;top:677px;font-size:12.5px;color:#f6f3ff;letter-spacing:-0.22px">85.91%</div>
<div class="cell" style="left:1321px;top:666.39px;width:85px;height:31.43px;background:#8c6ef9"></div>
<div class="t m" style="left:1349.5px;top:677px;font-size:12.5px;color:#f6f3ff;letter-spacing:-0.22px">85.37%</div>
<div class="cell" style="left:1407px;top:666.39px;width:86px;height:31.43px;background:#8c6ef9"></div>
<div class="t m" style="left:1436.5px;top:677px;font-size:12.5px;color:#f6f3ff;letter-spacing:-0.22px">82.56%</div>
<div class="cell" style="left:1494px;top:666.39px;width:86px;height:31.43px;background:#977ffb"></div>
<div class="t m" style="left:1523.5px;top:677px;font-size:12.5px;color:#f6f3ff;letter-spacing:-0.22px">79.77%</div>
<div class="a" style="left:1581px;top:666.39px;width:9.4px;height:31.43px;background:#8c6ef9"></div>
<div class="t" style="left:400.6px;top:709px;font-size:12.8px;color:#62666d;letter-spacing:-0.48px">China</div>
<div class="cb" style="top:706.2px;background:#80e1d9"></div>
<svg style="left:595.3px;top:710.3px" width="11" height="9" viewBox="0 0 11 9" fill="none" stroke="#fff" stroke-width="1.6" stroke-linecap="round" stroke-linejoin="round"><path d="M1.6 4.6l2.7 2.7 5-5.5"/></svg>
<svg style="left:623.6px;top:710.7px" width="6" height="8" viewBox="0 0 6 8" fill="none" stroke="#1d1f24" stroke-width="1.35" stroke-linecap="round" stroke-linejoin="round"><path d="M1.4 1l3 3-3 3"/></svg>
<div class="t" style="left:642.6px;top:709px;font-size:12.8px;color:#62666d;letter-spacing:0.21px">undefined</div>
<div class="tot" style="top:698.82px;height:31.43px"></div>
<div class="t m" style="left:844.6px;top:709px;font-size:12.5px;color:#62666d;letter-spacing:-0.23px">100%</div>
<div class="cell" style="left:887px;top:698.82px;width:86px;height:31.43px;background:#8c6ef9"></div>
<div class="t m" style="left:916.5px;top:709px;font-size:12.5px;color:#f6f3ff;letter-spacing:-0.22px">87.01%</div>
<div class="cell" style="left:974px;top:698.82px;width:85px;height:31.43px;background:#8c6ef9"></div>
<div class="t m" style="left:1002.5px;top:709px;font-size:12.5px;color:#f6f3ff;letter-spacing:-0.22px">85.94%</div>
<div class="cell" style="left:1060px;top:698.82px;width:86px;height:31.43px;background:#8c6ef9"></div>
<div class="t m" style="left:1089.5px;top:709px;font-size:12.5px;color:#f6f3ff;letter-spacing:-0.22px">85.66%</div>
<div class="cell" style="left:1147px;top:698.82px;width:86px;height:31.43px;background:#8c6ef9"></div>
<div class="t m" style="left:1176.5px;top:709px;font-size:12.5px;color:#f6f3ff;letter-spacing:-0.22px">84.84%</div>
<div class="cell" style="left:1234px;top:698.82px;width:86px;height:31.43px;background:#8c6ef9"></div>
<div class="t m" style="left:1263.5px;top:709px;font-size:12.5px;color:#f6f3ff;letter-spacing:-0.22px">85.83%</div>
<div class="cell" style="left:1321px;top:698.82px;width:85px;height:31.43px;background:#8c6ef9"></div>
<div class="t m" style="left:1349.5px;top:709px;font-size:12.5px;color:#f6f3ff;letter-spacing:-0.22px">84.64%</div>
<div class="cell" style="left:1407px;top:698.82px;width:86px;height:31.43px;background:#8c6ef9"></div>
<div class="t m" style="left:1436.5px;top:709px;font-size:12.5px;color:#f6f3ff;letter-spacing:-0.22px">81.76%</div>
<div class="cell" style="left:1494px;top:698.82px;width:86px;height:31.43px;background:#977ffb"></div>
<div class="t m" style="left:1523.5px;top:709px;font-size:12.5px;color:#f6f3ff;letter-spacing:-0.22px">78.87%</div>
<div class="a" style="left:1581px;top:698.82px;width:9.4px;height:31.43px;background:#8c6ef9"></div>
<div class="t" style="left:400.6px;top:741px;font-size:12.8px;color:#62666d;letter-spacing:-0.21px">Japan</div>
<div class="cb" style="top:738.6px;background:#f8bc3b"></div>
<svg style="left:595.3px;top:742.8px" width="11" height="9" viewBox="0 0 11 9" fill="none" stroke="#fff" stroke-width="1.6" stroke-linecap="round" stroke-linejoin="round"><path d="M1.6 4.6l2.7 2.7 5-5.5"/></svg>
<svg style="left:623.6px;top:743.1px" width="6" height="8" viewBox="0 0 6 8" fill="none" stroke="#1d1f24" stroke-width="1.35" stroke-linecap="round" stroke-linejoin="round"><path d="M1.4 1l3 3-3 3"/></svg>
<div class="t" style="left:642.6px;top:741px;font-size:12.8px;color:#62666d;letter-spacing:0.21px">undefined</div>
<div class="tot" style="top:731.25px;height:31.43px"></div>
<div class="t m" style="left:844.6px;top:742px;font-size:12.5px;color:#62666d;letter-spacing:-0.23px">100%</div>
<div class="cell" style="left:887px;top:731.25px;width:86px;height:31.43px;background:#8c6ef9"></div>
<div class="t m" style="left:916.5px;top:742px;font-size:12.5px;color:#f6f3ff;letter-spacing:-0.22px">86.58%</div>
<div class="cell" style="left:974px;top:731.25px;width:85px;height:31.43px;background:#8c6ef9"></div>
<div class="t m" style="left:1002.5px;top:742px;font-size:12.5px;color:#f6f3ff;letter-spacing:-0.22px">85.49%</div>
<div class="cell" style="left:1060px;top:731.25px;width:86px;height:31.43px;background:#8c6ef9"></div>
<div class="t m" style="left:1089.5px;top:742px;font-size:12.5px;color:#f6f3ff;letter-spacing:-0.22px">84.96%</div>
<div class="cell" style="left:1147px;top:731.25px;width:86px;height:31.43px;background:#8c6ef9"></div>
<div class="t m" style="left:1176.5px;top:742px;font-size:12.5px;color:#f6f3ff;letter-spacing:-0.22px">84.19%</div>
<div class="cell" style="left:1234px;top:731.25px;width:86px;height:31.43px;background:#8c6ef9"></div>
<div class="t m" style="left:1263.5px;top:742px;font-size:12.5px;color:#f6f3ff;letter-spacing:-0.22px">85.32%</div>
<div class="cell" style="left:1321px;top:731.25px;width:85px;height:31.43px;background:#8c6ef9"></div>
<div class="t m" style="left:1349.5px;top:742px;font-size:12.5px;color:#f6f3ff;letter-spacing:-0.22px">84.32%</div>
<div class="cell" style="left:1407px;top:731.25px;width:86px;height:31.43px;background:#8c6ef9"></div>
<div class="t m" style="left:1436.5px;top:742px;font-size:12.5px;color:#f6f3ff;letter-spacing:-0.22px">81.41%</div>
<div class="cell" style="left:1494px;top:731.25px;width:86px;height:31.43px;background:#977ffb"></div>
<div class="t m" style="left:1523.5px;top:742px;font-size:12.5px;color:#f6f3ff;letter-spacing:-0.22px">79.05%</div>
<div class="a" style="left:1581px;top:731.25px;width:9.4px;height:31.43px;background:#8c6ef9"></div>
<div class="t" style="left:400.6px;top:773px;font-size:12.8px;color:#62666d;letter-spacing:-0.25px">Germany</div>
<div class="cb" style="top:771.1px;background:#b2596e"></div>
<svg style="left:595.3px;top:775.2px" width="11" height="9" viewBox="0 0 11 9" fill="none" stroke="#fff" stroke-width="1.6" stroke-linecap="round" stroke-linejoin="round"><path d="M1.6 4.6l2.7 2.7 5-5.5"/></svg>
<svg style="left:623.6px;top:775.6px" width="6" height="8" viewBox="0 0 6 8" fill="none" stroke="#1d1f24" stroke-width="1.35" stroke-linecap="round" stroke-linejoin="round"><path d="M1.4 1l3 3-3 3"/></svg>
<div class="t" style="left:642.6px;top:773px;font-size:12.8px;color:#62666d;letter-spacing:0.21px">undefined</div>
<div class="tot" style="top:763.68px;height:31.43px"></div>
<div class="t m" style="left:844.6px;top:774px;font-size:12.5px;color:#62666d;letter-spacing:-0.23px">100%</div>
<div class="cell" style="left:887px;top:763.68px;width:86px;height:31.43px;background:#8c6ef9"></div>
<div class="t m" style="left:916.5px;top:774px;font-size:12.5px;color:#f6f3ff;letter-spacing:-0.22px">87.97%</div>
<div class="cell" style="left:974px;top:763.68px;width:85px;height:31.43px;background:#8c6ef9"></div>
<div class="t m" style="left:1002.5px;top:774px;font-size:12.5px;color:#f6f3ff;letter-spacing:-0.22px">86.52%</div>
<div class="cell" style="left:1060px;top:763.68px;width:86px;height:31.43px;background:#8c6ef9"></div>
<div class="t m" style="left:1089.5px;top:774px;font-size:12.5px;color:#f6f3ff;letter-spacing:-0.22px">86.43%</div>
<div class="cell" style="left:1147px;top:763.68px;width:86px;height:31.43px;background:#8c6ef9"></div>
<div class="t m" style="left:1184px;top:774px;font-size:12.5px;color:#f6f3ff;letter-spacing:-0.28px">85.7%</div>
<div class="cell" style="left:1234px;top:763.68px;width:86px;height:31.43px;background:#8c6ef9"></div>
<div class="t m" style="left:1271px;top:774px;font-size:12.5px;color:#f6f3ff;letter-spacing:-0.28px">87.1%</div>
<div class="cell" style="left:1321px;top:763.68px;width:85px;height:31.43px;background:#8c6ef9"></div>
<div class="t m" style="left:1349.5px;top:774px;font-size:12.5px;color:#f6f3ff;letter-spacing:-0.22px">86.25%</div>
<div class="cell" style="left:1407px;top:763.68px;width:86px;height:31.43px;background:#8c6ef9"></div>
<div class="t m" style="left:1436.5px;top:774px;font-size:12.5px;color:#f6f3ff;letter-spacing:-0.22px">83.05%</div>
<div class="cell" style="left:1494px;top:763.68px;width:86px;height:31.43px;background:#8c6ef9"></div>
<div class="t m" style="left:1523.5px;top:774px;font-size:12.5px;color:#f6f3ff;letter-spacing:-0.22px">80.71%</div>
<div class="a" style="left:1581px;top:763.68px;width:9.4px;height:31.43px;background:#8c6ef9"></div>
<div class="t" style="left:400.6px;top:806px;font-size:12.8px;color:#62666d;letter-spacing:0.04px">United Kingdom</div>
<div class="cb" style="top:803.5px;background:#72bef4"></div>
<svg style="left:595.3px;top:807.6px" width="11" height="9" viewBox="0 0 11 9" fill="none" stroke="#fff" stroke-width="1.6" stroke-linecap="round" stroke-linejoin="round"><path d="M1.6 4.6l2.7 2.7 5-5.5"/></svg>
<svg style="left:623.6px;top:808px" width="6" height="8" viewBox="0 0 6 8" fill="none" stroke="#1d1f24" stroke-width="1.35" stroke-linecap="round" stroke-linejoin="round"><path d="M1.4 1l3 3-3 3"/></svg>
<div class="t" style="left:642.6px;top:806px;font-size:12.8px;color:#62666d;letter-spacing:0.21px">undefined</div>
<div class="tot" style="top:796.11px;height:31.43px"></div>
<div class="t m" style="left:844.6px;top:807px;font-size:12.5px;color:#62666d;letter-spacing:-0.23px">100%</div>
<div class="cell" style="left:887px;top:796.11px;width:86px;height:31.43px;background:#8c6ef9"></div>
<div class="t m" style="left:916.5px;top:807px;font-size:12.5px;color:#f6f3ff;letter-spacing:-0.22px">87.36%</div>
<div class="cell" style="left:974px;top:796.11px;width:85px;height:31.43px;background:#8c6ef9"></div>
<div class="t m" style="left:1002.5px;top:807px;font-size:12.5px;color:#f6f3ff;letter-spacing:-0.22px">86.01%</div>
<div class="cell" style="left:1060px;top:796.11px;width:86px;height:31.43px;background:#8c6ef9"></div>
<div class="t m" style="left:1089.5px;top:807px;font-size:12.5px;color:#f6f3ff;letter-spacing:-0.22px">85.77%</div>
<div class="cell" style="left:1147px;top:796.11px;width:86px;height:31.43px;background:#8c6ef9"></div>
<div class="t m" style="left:1176.5px;top:807px;font-size:12.5px;color:#f6f3ff;letter-spacing:-0.22px">84.81%</div>
<div class="cell" style="left:1234px;top:796.11px;width:86px;height:31.43px;background:#8c6ef9"></div>
<div class="t m" style="left:1263.5px;top:807px;font-size:12.5px;color:#f6f3ff;letter-spacing:-0.22px">85.64%</div>
<div class="cell" style="left:1321px;top:796.11px;width:85px;height:31.43px;background:#8c6ef9"></div>
<div class="t m" style="left:1349.5px;top:807px;font-size:12.5px;color:#f6f3ff;letter-spacing:-0.22px">85.41%</div>
<div class="cell" style="left:1407px;top:796.11px;width:86px;height:31.43px;background:#8c6ef9"></div>
<div class="t m" style="left:1436.5px;top:807px;font-size:12.5px;color:#f6f3ff;letter-spacing:-0.22px">82.42%</div>
<div class="cell" style="left:1494px;top:796.11px;width:86px;height:31.43px;background:#8c6ef9"></div>
<div class="t m" style="left:1523.5px;top:807px;font-size:12.5px;color:#f6f3ff;letter-spacing:-0.22px">80.35%</div>
<div class="a" style="left:1581px;top:796.11px;width:9.4px;height:31.43px;background:#8c6ef9"></div>
<div class="t" style="left:400.6px;top:838px;font-size:12.8px;color:#62666d;letter-spacing:-0.26px">South Korea</div>
<div class="cb cbe" style="top:835.9px"></div>
<svg style="left:623.6px;top:840.4px" width="6" height="8" viewBox="0 0 6 8" fill="none" stroke="#1d1f24" stroke-width="1.35" stroke-linecap="round" stroke-linejoin="round"><path d="M1.4 1l3 3-3 3"/></svg>
<div class="t" style="left:642.6px;top:838px;font-size:12.8px;color:#62666d;letter-spacing:0.21px">undefined</div>
<div class="tot" style="top:828.54px;height:31.43px"></div>
<div class="t m" style="left:844.6px;top:839px;font-size:12.5px;color:#62666d;letter-spacing:-0.23px">100%</div>
<div class="cell" style="left:887px;top:828.54px;width:86px;height:31.43px;background:#8c6ef9"></div>
<div class="t m" style="left:916.5px;top:839px;font-size:12.5px;color:#f6f3ff;letter-spacing:-0.22px">87.35%</div>
<div class="cell" style="left:974px;top:828.54px;width:85px;height:31.43px;background:#8c6ef9"></div>
<div class="t m" style="left:1002.5px;top:839px;font-size:12.5px;color:#f6f3ff;letter-spacing:-0.22px">85.99%</div>
<div class="cell" style="left:1060px;top:828.54px;width:86px;height:31.43px;background:#8c6ef9"></div>
<div class="t m" style="left:1097px;top:839px;font-size:12.5px;color:#f6f3ff;letter-spacing:-0.28px">85.7%</div>
<div class="cell" style="left:1147px;top:828.54px;width:86px;height:31.43px;background:#8c6ef9"></div>
<div class="t m" style="left:1176.5px;top:839px;font-size:12.5px;color:#f6f3ff;letter-spacing:-0.22px">84.83%</div>
<div class="cell" style="left:1234px;top:828.54px;width:86px;height:31.43px;background:#8c6ef9"></div>
<div class="t m" style="left:1263.5px;top:839px;font-size:12.5px;color:#f6f3ff;letter-spacing:-0.22px">85.52%</div>
<div class="cell" style="left:1321px;top:828.54px;width:85px;height:31.43px;background:#8c6ef9"></div>
<div class="t m" style="left:1349.5px;top:839px;font-size:12.5px;color:#f6f3ff;letter-spacing:-0.22px">85.03%</div>
<div class="cell" style="left:1407px;top:828.54px;width:86px;height:31.43px;background:#8c6ef9"></div>
<div class="t m" style="left:1436.5px;top:839px;font-size:12.5px;color:#f6f3ff;letter-spacing:-0.22px">82.33%</div>
<div class="cell" style="left:1494px;top:828.54px;width:86px;height:31.43px;background:#977ffb"></div>
<div class="t m" style="left:1523.5px;top:839px;font-size:12.5px;color:#f6f3ff;letter-spacing:-0.22px">79.62%</div>
<div class="a" style="left:1581px;top:828.54px;width:9.4px;height:31.43px;background:#8c6ef9"></div>
<div class="t" style="left:400.6px;top:871px;font-size:12.8px;color:#62666d;letter-spacing:-0.48px">China</div>
<div class="cb cbe" style="top:868.4px"></div>
<svg style="left:623.6px;top:872.9px" width="6" height="8" viewBox="0 0 6 8" fill="none" stroke="#1d1f24" stroke-width="1.35" stroke-linecap="round" stroke-linejoin="round"><path d="M1.4 1l3 3-3 3"/></svg>
<div class="t" style="left:641.6px;top:871px;font-size:12.8px;color:#62666d;letter-spacing:0.07px">Beijing</div>
<div class="tot" style="top:860.97px;height:31.43px"></div>
<div class="t m" style="left:844.6px;top:871px;font-size:12.5px;color:#62666d;letter-spacing:-0.23px">100%</div>
<div class="cell" style="left:887px;top:860.97px;width:86px;height:31.43px;background:#8c6ef9"></div>
<div class="t m" style="left:916.5px;top:871px;font-size:12.5px;color:#f6f3ff;letter-spacing:-0.22px">88.62%</div>
<div class="cell" style="left:974px;top:860.97px;width:85px;height:31.43px;background:#8c6ef9"></div>
<div class="t m" style="left:1002.5px;top:871px;font-size:12.5px;color:#f6f3ff;letter-spacing:-0.22px">87.51%</div>
<div class="cell" style="left:1060px;top:860.97px;width:86px;height:31.43px;background:#8c6ef9"></div>
<div class="t m" style="left:1097px;top:871px;font-size:12.5px;color:#f6f3ff;letter-spacing:-0.28px">87.2%</div>
<div class="cell" style="left:1147px;top:860.97px;width:86px;height:31.43px;background:#8c6ef9"></div>
<div class="t m" style="left:1184px;top:871px;font-size:12.5px;color:#f6f3ff;letter-spacing:-0.28px">86.5%</div>
<div class="cell" style="left:1234px;top:860.97px;width:86px;height:31.43px;background:#8c6ef9"></div>
<div class="t m" style="left:1263.5px;top:871px;font-size:12.5px;color:#f6f3ff;letter-spacing:-0.22px">87.35%</div>
<div class="cell" style="left:1321px;top:860.97px;width:85px;height:31.43px;background:#8c6ef9"></div>
<div class="t m" style="left:1349.5px;top:871px;font-size:12.5px;color:#f6f3ff;letter-spacing:-0.22px">86.03%</div>
<div class="cell" style="left:1407px;top:860.97px;width:86px;height:31.43px;background:#8c6ef9"></div>
<div class="t m" style="left:1436.5px;top:871px;font-size:12.5px;color:#f6f3ff;letter-spacing:-0.22px">83.13%</div>
<div class="cell" style="left:1494px;top:860.97px;width:86px;height:31.43px;background:#8c6ef9"></div>
<div class="t m" style="left:1523.5px;top:871px;font-size:12.5px;color:#f6f3ff;letter-spacing:-0.22px">80.68%</div>
<div class="a" style="left:1581px;top:860.97px;width:9.4px;height:31.43px;background:#8c6ef9"></div>
<div class="t" style="left:399.6px;top:903px;font-size:12.8px;color:#62666d;letter-spacing:0.21px">Netherlands</div>
<div class="cb cbe" style="top:900.8px"></div>
<svg style="left:623.6px;top:905.3px" width="6" height="8" viewBox="0 0 6 8" fill="none" stroke="#1d1f24" stroke-width="1.35" stroke-linecap="round" stroke-linejoin="round"><path d="M1.4 1l3 3-3 3"/></svg>
<div class="t" style="left:642.6px;top:903px;font-size:12.8px;color:#62666d;letter-spacing:0.21px">undefined</div>
<div class="tot" style="top:893.4px;height:25.3px"></div>
<div class="t m" style="left:844.6px;top:904px;font-size:12.5px;color:#62666d;letter-spacing:-0.23px">100%</div>
<div class="cell" style="left:887px;top:893.4px;width:86px;height:25.3px;background:#8c6ef9"></div>
<div class="t m" style="left:916.5px;top:904px;font-size:12.5px;color:#f6f3ff;letter-spacing:-0.22px">88.85%</div>
<div class="cell" style="left:974px;top:893.4px;width:85px;height:25.3px;background:#8c6ef9"></div>
<div class="t m" style="left:1002.5px;top:904px;font-size:12.5px;color:#f6f3ff;letter-spacing:-0.22px">87.44%</div>
<div class="cell" style="left:1060px;top:893.4px;width:86px;height:25.3px;background:#8c6ef9"></div>
<div class="t m" style="left:1089.5px;top:904px;font-size:12.5px;color:#f6f3ff;letter-spacing:-0.22px">87.07%</div>
<div class="cell" style="left:1147px;top:893.4px;width:86px;height:25.3px;background:#8c6ef9"></div>
<div class="t m" style="left:1176.5px;top:904px;font-size:12.5px;color:#f6f3ff;letter-spacing:-0.22px">86.75%</div>
<div class="cell" style="left:1234px;top:893.4px;width:86px;height:25.3px;background:#8c6ef9"></div>
<div class="t m" style="left:1263.5px;top:904px;font-size:12.5px;color:#f6f3ff;letter-spacing:-0.22px">87.89%</div>
<div class="cell" style="left:1321px;top:893.4px;width:85px;height:25.3px;background:#8c6ef9"></div>
<div class="t m" style="left:1349.5px;top:904px;font-size:12.5px;color:#f6f3ff;letter-spacing:-0.22px">87.69%</div>
<div class="cell" style="left:1407px;top:893.4px;width:86px;height:25.3px;background:#8c6ef9"></div>
<div class="t m" style="left:1436.5px;top:904px;font-size:12.5px;color:#f6f3ff;letter-spacing:-0.22px">84.35%</div>
<div class="cell" style="left:1494px;top:893.4px;width:86px;height:25.3px;background:#8c6ef9"></div>
<div class="t m" style="left:1523.5px;top:904px;font-size:12.5px;color:#f6f3ff;letter-spacing:-0.22px">82.61%</div>
<div class="a" style="left:1581px;top:893.4px;width:9.4px;height:25.3px;background:#8c6ef9"></div>
<div class="a" style="left:422px;top:920px;width:460px;height:9px;border-radius:4.5px;background:#e9e9eb"></div>
<div class="a" style="left:1591.5px;top:552px;width:8px;height:39.5px;border-radius:4px;background:#e9e9eb"></div>
<div class="a" style="left:351px;top:929px;width:1249px;height:47px;background:#fff;border-top:1px solid #efeff1"></div>
<svg style="left:372.3px;top:944.5px" width="17" height="17" viewBox="0 0 17 17" fill="none" stroke="#1d1f24" stroke-width="1.4"><circle cx="8.5" cy="8.5" r="7.6"/><path d="M1 8.5h8v7.5"/></svg>
<div class="t" style="left:398.6px;top:948px;font-size:12.4px;color:#1d1f24;letter-spacing:0.37px;-webkit-text-stroke:0.27px #1d1f24">Find Interesting Segments</div>
<div class="t" style="left:570.4px;top:948px;font-size:12.3px;color:#8b8f96;letter-spacing:0.27px">Receive an email of statistically significant segments impacting retention.</div>
<div class="a" style="left:1539px;top:920px;width:43px;height:43px;border-radius:50%;background:#fff;border:1px solid #efeff1;box-shadow:0 2px 6px rgba(0,0,0,.10)"></div>
<svg style="left:1553.5px;top:934.5px" width="14" height="14" viewBox="0 0 14 14" fill="none" stroke="#1d1f24" stroke-width="1.4" stroke-linecap="round"><path d="M6 8a2.8 2.8 0 004 0l2.3-2.3a2.8 2.8 0 00-4-4L7.6 2.4"/><path d="M8 6a2.8 2.8 0 00-4 0L1.7 8.3a2.8 2.8 0 004 4l.7-.7"/></svg>
<svg style="left:434px;top:595.5px" width="10" height="15" viewBox="0 0 10 15"><path d="M1 1v10.5l2.5-2.3 1.8 4 1.7-.8-1.8-3.8H8.8z" fill="#111" stroke="#fff" stroke-width=".8"/></svg>
</div>
</body></html>
